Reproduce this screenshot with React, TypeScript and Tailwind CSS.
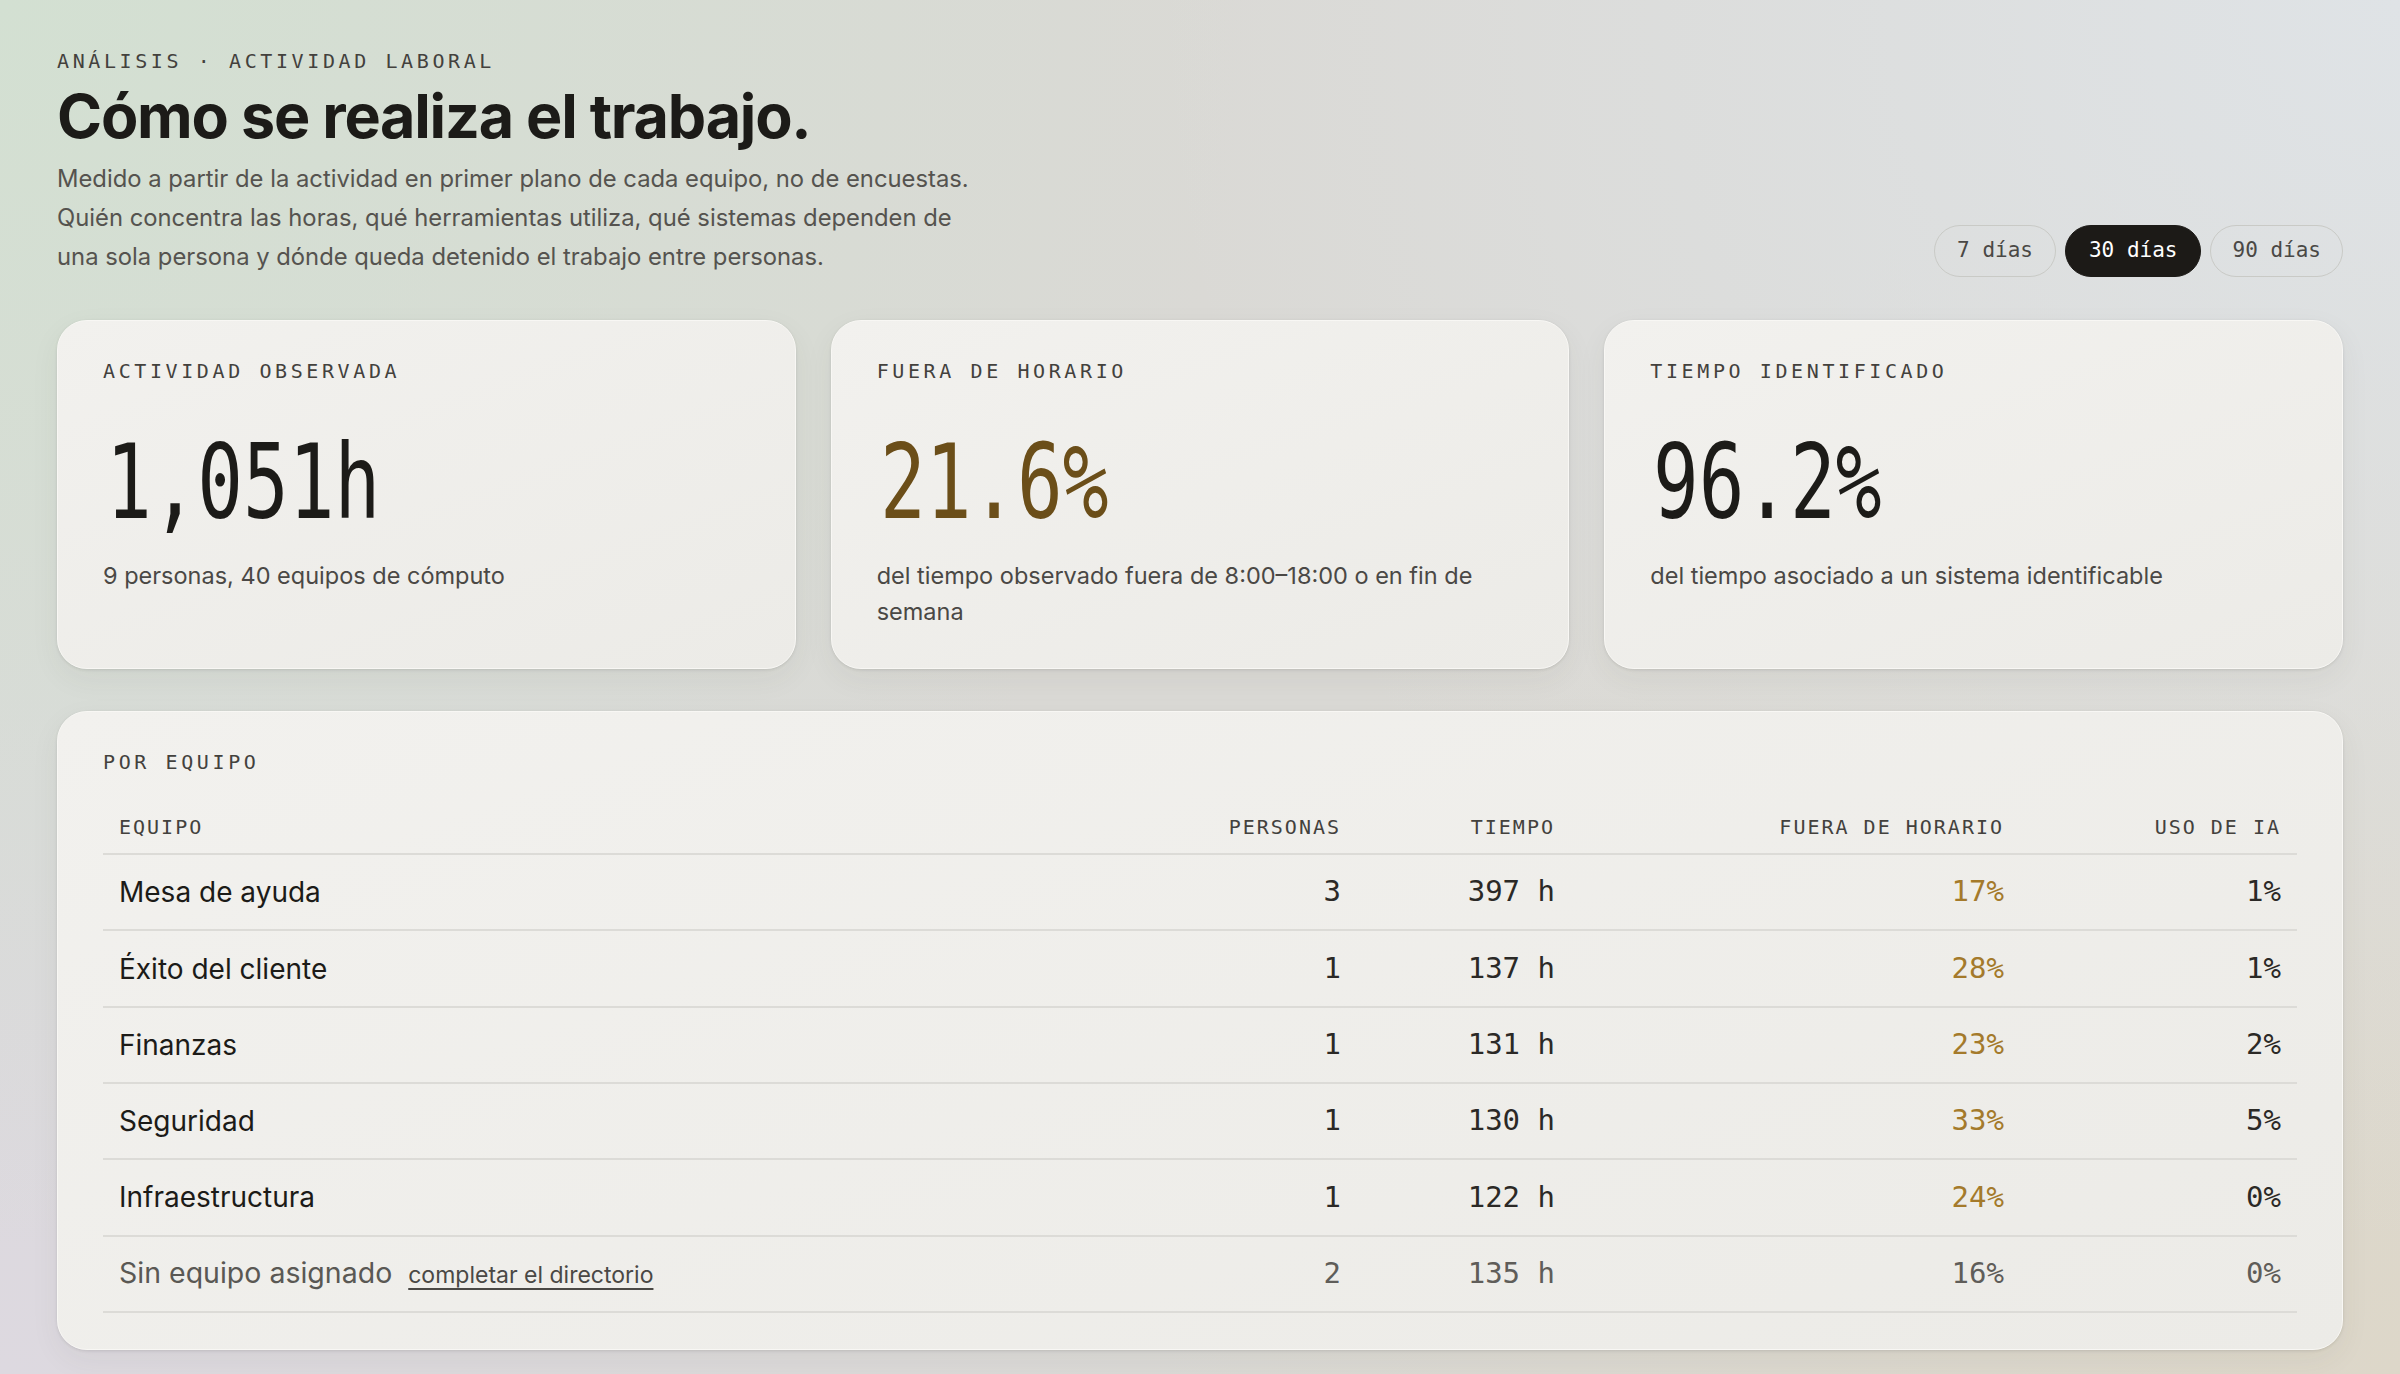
import React from "react";

const rows = [
  { name: "Mesa de ayuda", p: "3", t: "397", f: "17%", ia: "1%" },
  { name: "Éxito del cliente", p: "1", t: "137", f: "28%", ia: "1%" },
  { name: "Finanzas", p: "1", t: "131", f: "23%", ia: "2%" },
  { name: "Seguridad", p: "1", t: "130", f: "33%", ia: "5%" },
  { name: "Infraestructura", p: "1", t: "122", f: "24%", ia: "0%" },
];

const MONO = "font-['DejaVu_Sans_Mono','Liberation_Mono',monospace]";
const LABEL =
  "font-['DejaVu_Sans_Mono','Liberation_Mono',monospace] text-[20px] leading-[28px] tracking-[0.18em] text-[#43413d] uppercase";
const CARD =
  "rounded-[30px] border border-[#f8f7f4] bg-[linear-gradient(160deg,#f2f1ee,#ecebe7)] shadow-[0_1px_3px_rgba(40,40,30,0.12),0_10px_30px_rgba(60,60,50,0.06)]";

function Stat({
  label,
  value,
  color,
  children,
}: {
  label: string;
  value: string;
  color: string;
  children: React.ReactNode;
}) {
  return (
    <div className={`${CARD} px-[45px] pt-[36px] pb-[38px]`}>
      <div className={LABEL}>{label}</div>
      <div
        className={`mt-[45px] h-[104px] text-[104px] leading-none ${MONO} ${color}`}
      >
        <span className="inline-block origin-left scale-x-[0.73] pl-[4px]">
          {value}
        </span>
      </div>
      <div className="mt-[24px] text-[23.5px] leading-[36px] text-[#4a4845]">
        {children}
      </div>
    </div>
  );
}

export default function App() {
  return (
    <div className="min-h-screen w-full bg-[#dad9d5] bg-[radial-gradient(circle_at_0%_0%,#d3e0d2_0%,transparent_45%),radial-gradient(circle_at_100%_0%,#dfe3e6_0%,transparent_45%),radial-gradient(circle_at_0%_100%,#ddd9e0_0%,transparent_45%),radial-gradient(circle_at_100%_100%,#ddd7c9_0%,transparent_45%)] font-['Inter','Noto_Sans',sans-serif] text-[#1c1b18]">
      <div className="px-[57px] pt-[47px] pb-[24px]">
        {/* Header */}
        <div className="flex items-end justify-between">
          <div>
            <div className={`${LABEL} text-[#4d4b47]`}>
              ANÁLISIS · ACTIVIDAD LABORAL
            </div>
            <h1 className="mt-[8px] text-[61px] font-bold leading-[1.1] tracking-[-0.02em] text-[#1c1b18]">
              Cómo se realiza el trabajo.
            </h1>
            <p className="mt-[9px] whitespace-nowrap text-[23.8px] leading-[39px] text-[#55534f]">
              Medido a partir de la actividad en primer plano de cada equipo, no
              de encuestas.
              <br />
              Quién concentra las horas, qué herramientas utiliza, qué sistemas
              dependen de
              <br />
              una sola persona y dónde queda detenido el trabajo entre personas.
            </p>
          </div>
          <div className={`mb-[-1px] flex gap-[9px] ${MONO} text-[21px]`}>
            <button className="flex h-[52px] items-center rounded-full border-[1.5px] border-[#c9cac6] px-[22px] text-[#4a4845]">
              7 días
            </button>
            <button className="flex h-[52px] items-center rounded-full border-[1.5px] border-[#1c1a17] bg-[#1c1a17] px-[23px] text-white">
              30 días
            </button>
            <button className="flex h-[52px] items-center rounded-full border-[1.5px] border-[#c9cac6] px-[21px] text-[#4a4845]">
              90 días
            </button>
          </div>
        </div>

        {/* Stat cards */}
        <div className="mt-[44px] grid grid-cols-3 gap-[35px]">
          <Stat label="ACTIVIDAD OBSERVADA" value="1,051h" color="text-[#1c1b18]">
            9 personas, 40 equipos de cómputo
          </Stat>
          <Stat label="FUERA DE HORARIO" value="21.6%" color="text-[#6b4e19]">
            <span className="whitespace-nowrap">
              del tiempo observado fuera de 8:00–18:00 o en fin de
            </span>
            <br />
            semana
          </Stat>
          <Stat label="TIEMPO IDENTIFICADO" value="96.2%" color="text-[#1c1b18]">
            del tiempo asociado a un sistema identificable
          </Stat>
        </div>

        {/* Table */}
        <div className={`${CARD} mt-[42px] px-[45px] pt-[36px] pb-[36px]`}>
          <div className={LABEL}>POR EQUIPO</div>
          <div className="mt-[37px]">
            <div
              className={`grid grid-cols-[1fr_200px_214px_449px_277px] border-b-2 border-[#dcdbd7] pb-[12px] ${MONO} text-[20px] leading-[28px] tracking-[0.1em] text-[#43413d]`}
            >
              <div className="px-4">EQUIPO</div>
              <div className="px-4 text-right">PERSONAS</div>
              <div className="px-4 text-right">TIEMPO</div>
              <div className="px-4 text-right">FUERA DE HORARIO</div>
              <div className="px-4 text-right">USO DE IA</div>
            </div>
            {rows.map((r) => (
              <div
                key={r.name}
                className="grid h-[76.3px] grid-cols-[1fr_200px_214px_449px_277px] items-center border-b-2 border-[#dcdbd7]"
              >
                <div className="px-4 text-[28px] text-[#1c1b18]">{r.name}</div>
                <div className={`px-4 text-right text-[29px] ${MONO} text-[#2b2926]`}>
                  {r.p}
                </div>
                <div className={`px-4 text-right text-[29px] ${MONO} text-[#2b2926]`}>
                  {r.t} h
                </div>
                <div className={`px-4 text-right text-[29px] ${MONO} text-[#a47a2b]`}>
                  {r.f}
                </div>
                <div className={`px-4 text-right text-[29px] ${MONO} text-[#2b2926]`}>
                  {r.ia}
                </div>
              </div>
            ))}
            <div className="grid h-[76.3px] grid-cols-[1fr_200px_214px_449px_277px] items-center border-b-2 border-[#dcdbd7]">
              <div className="flex items-baseline gap-[16px] px-4">
                <span className="text-[28.5px] text-[#5a5854]">
                  Sin equipo asignado
                </span>
                <a className="text-[23px] text-[#4a4845] underline decoration-[1.5px] underline-offset-[5px]">
                  completar el directorio
                </a>
              </div>
              <div className={`px-4 text-right text-[29px] ${MONO} text-[#5f5d59]`}>
                2
              </div>
              <div className={`px-4 text-right text-[29px] ${MONO} text-[#5f5d59]`}>
                135 h
              </div>
              <div className={`px-4 text-right text-[29px] ${MONO} text-[#5f5d59]`}>
                16%
              </div>
              <div className={`px-4 text-right text-[29px] ${MONO} text-[#5f5d59]`}>
                0%
              </div>
            </div>
          </div>
        </div>
      </div>
    </div>
  );
}
